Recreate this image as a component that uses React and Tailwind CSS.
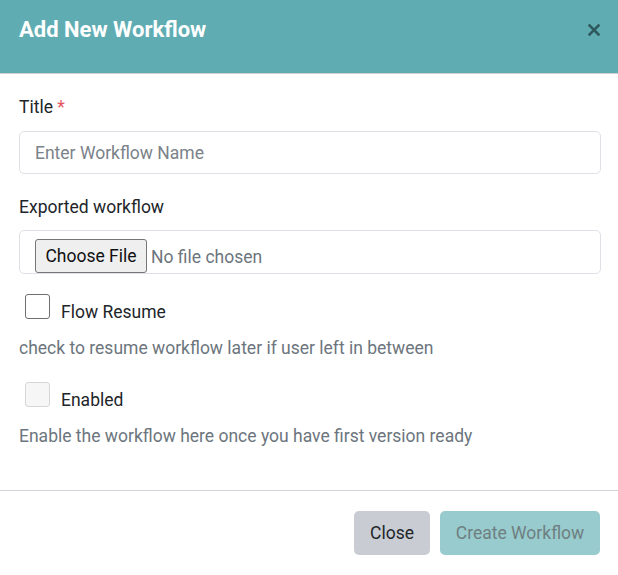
export default function App() {
  return (
    <div className="w-[618px] h-[575px] bg-white flex flex-col" style={{ fontFamily: "Roboto, 'Liberation Sans', sans-serif" }}>
      <div className="h-[74px] shrink-0 bg-[#5fadb3] border-b border-[#cfcfcf] flex items-start justify-between pl-[19px] pr-[18px] pt-[16px]">
        <h1 className="text-[22px] leading-[28px] font-bold text-white">Add New Workflow</h1>
        <svg width="12" height="12" viewBox="0 0 12 12" className="mt-[8px]">
          <path d="M1.5 1.5 L10.5 10.5 M10.5 1.5 L1.5 10.5" stroke="#2f5a5d" strokeWidth="2.6" strokeLinecap="square" />
        </svg>
      </div>
      <div className="flex-1 px-[19px] pt-[20px] flex flex-col text-[17.5px] leading-[26px]">
        <label className="text-[#212529]">
          Title <span className="text-[#e3545c]">*</span>
        </label>
        <div className="mt-[11px] h-[43px] w-[582px] border border-[#dee2e6] rounded-[5px] flex items-center px-[15px]">
          <span className="text-[#7b8289]">Enter Workflow Name</span>
        </div>
        <label className="mt-[20px] text-[#212529]">Exported workflow</label>
        <div className="mt-[10px] h-[44px] w-[582px] border border-[#dee2e6] rounded-[5px] flex items-end pl-[15px]">
          <div className="h-[34px] w-[112px] bg-[#efefef] border border-[#767676] rounded-[3px] flex items-center justify-center text-[#111]">Choose File</div>
          <span className="ml-[4px] mb-[3px] text-[#6c757d]">No file chosen</span>
        </div>
        <div className="mt-[20px] flex items-start pl-[6px]">
          <div className="w-[25px] h-[25px] border border-[#6f6f6f] rounded-[3px] bg-white" />
          <span className="ml-[11px] mt-[5px] text-[#212529]">Flow Resume</span>
        </div>
        <p className="mt-[10px] text-[#6c757d]">check to resume workflow later if user left in between</p>
        <div className="mt-[21px] flex items-start pl-[6px]">
          <div className="w-[25px] h-[25px] border border-[#d6d6d6] rounded-[3px] bg-[#f6f6f6]" />
          <span className="ml-[11px] mt-[5px] text-[#212529]">Enabled</span>
        </div>
        <p className="mt-[10px] text-[#6c757d]">Enable the workflow here once you have first version ready</p>
      </div>
      <div className="h-[85px] shrink-0 border-t border-[#d2d2d8] flex items-start justify-end gap-[10px] pr-[18px] pt-[20px]">
        <button className="h-[44px] w-[76px] rounded-[5px] bg-[#c9ccd3] text-[17.5px] text-[#212529]">Close</button>
        <button className="h-[44px] w-[160px] rounded-[5px] bg-[#98cbce] text-[17.5px] text-[#6e7f80]">Create Workflow</button>
      </div>
    </div>
  );
}
